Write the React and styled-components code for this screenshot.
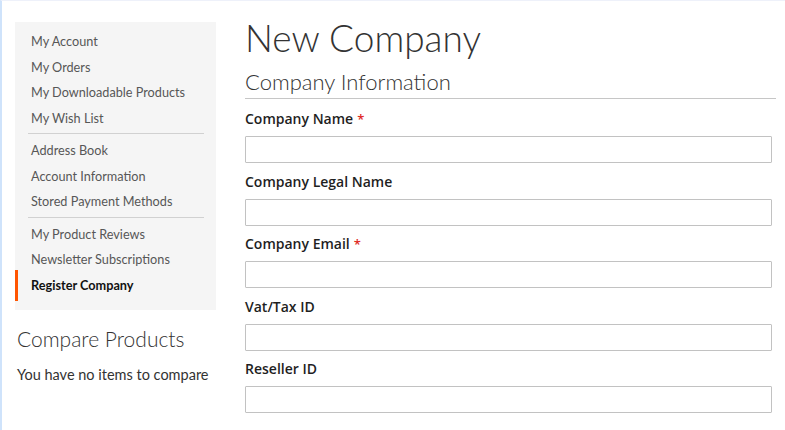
import React from 'react';
import styled, { createGlobalStyle } from 'styled-components';

const GlobalStyle = createGlobalStyle`
  html, body {
    margin: 0;
    padding: 0;
    background: #fff;
  }
  body {
    font-family: Lato, "Open Sans", Arial, sans-serif;
    color: #333;
  }
  #root {
    min-height: 430px;
    border-left: 2px solid #cfe3fb;
    border-top: 1px solid #eef1fa;
    box-sizing: border-box;
  }
`;

const accountLinks = [
  ['My Account', 'My Orders', 'My Downloadable Products', 'My Wish List'],
  ['Address Book', 'Account Information', 'Stored Payment Methods'],
  ['My Product Reviews', 'Newsletter Subscriptions', 'Register Company'],
];

const fields = [
  { label: 'Company Name', required: true },
  { label: 'Company Legal Name' },
  { label: 'Company Email', required: true },
  { label: 'Vat/Tax ID' },
  { label: 'Reseller ID' },
];

const App = () => (
  <>
    <GlobalStyle />
    <Page>
      <Sidebar>
        <AccountNav>
          {accountLinks.map((group, gi) => (
            <React.Fragment key={gi}>
              {gi > 0 && <NavDivider />}
              <NavGroup>
                {group.map((item) => (
                  <NavItem key={item} $active={item === 'Register Company'}>
                    {item}
                  </NavItem>
                ))}
              </NavGroup>
            </React.Fragment>
          ))}
        </AccountNav>

        <CompareBlock>
          <CompareTitle>Compare Products</CompareTitle>
          <CompareEmpty>You have no items to compare</CompareEmpty>
        </CompareBlock>
      </Sidebar>

      <Main>
        <PageTitle>New Company</PageTitle>
        <Legend>Company Information</Legend>
        <Fields>
          {fields.map((f) => (
            <Field key={f.label}>
              <Label>
                {f.label}
                {f.required && <Required>*</Required>}
              </Label>
              <Input type="text" />
            </Field>
          ))}
        </Fields>
      </Main>
    </Page>
  </>
);

const Page = styled.div`
  display: grid;
  grid-template-columns: 201px 1fr;
  column-gap: 29px;
  padding: 21px 9px 0 13px;
`;

const Sidebar = styled.aside`
  display: flex;
  flex-direction: column;
`;

const AccountNav = styled.nav`
  background: #f5f5f5;
  padding: 7px 0 12px;
`;

const NavGroup = styled.ul`
  list-style: none;
  margin: 0;
  padding: 0;
`;

const NavItem = styled.li`
  position: relative;
  height: 25.5px;
  line-height: 25.5px;
  padding-left: 16px;
  font-size: 12.7px;
  color: ${(p) => (p.$active ? '#111' : '#575757')};
  font-weight: ${(p) => (p.$active ? 700 : 400)};
  white-space: nowrap;

  &::before {
    content: '';
    display: ${(p) => (p.$active ? 'block' : 'none')};
    position: absolute;
    left: 0;
    top: -3px;
    bottom: -3px;
    width: 3px;
    background: #ff5501;
  }
`;

const NavDivider = styled.hr`
  border: 0;
  border-top: 1px solid #d1d1d1;
  margin: 2px 12px 4px 13px;
`;

const CompareBlock = styled.div`
  padding: 16px 2px 0;
`;

const CompareTitle = styled.div`
  font-size: 21px;
  font-weight: 300;
  color: #333;
  line-height: 26px;
`;

const CompareEmpty = styled.p`
  margin: 13px 0 0;
  font-size: 14.5px;
  line-height: 20px;
  color: #333;
`;

const Main = styled.main`
  display: flex;
  flex-direction: column;
`;

const PageTitle = styled.h1`
  margin: 0;
  font-size: 37px;
  line-height: 32px;
  font-weight: 300;
  color: #333;
`;

const Legend = styled.h2`
  margin: 15px 0 0;
  padding-bottom: 3px;
  font-size: 22px;
  line-height: 26px;
  font-weight: 300;
  color: #333;
  border-bottom: 1px solid #c6c6c6;
`;

const Fields = styled.div`
  display: flex;
  flex-direction: column;
  gap: 8.5px;
  padding-top: 10px;
  padding-right: 4px;
`;

const Field = styled.div`
  display: flex;
  flex-direction: column;
  gap: 7px;
`;

const Label = styled.label`
  font-family: "Open Sans", Lato, Arial, sans-serif;
  font-size: 14px;
  line-height: 20px;
  font-weight: 600;
  color: #1f1f1f;
`;

const Required = styled.span`
  color: #e02b27;
  margin-left: 4px;
  font-size: 13px;
`;

const Input = styled.input`
  box-sizing: border-box;
  width: 100%;
  height: 27px;
  margin: 0;
  border: 1px solid #c2c2c2;
  border-radius: 1px;
  background: #fff;
  font: inherit;
  outline: none;
`;

export default App;
